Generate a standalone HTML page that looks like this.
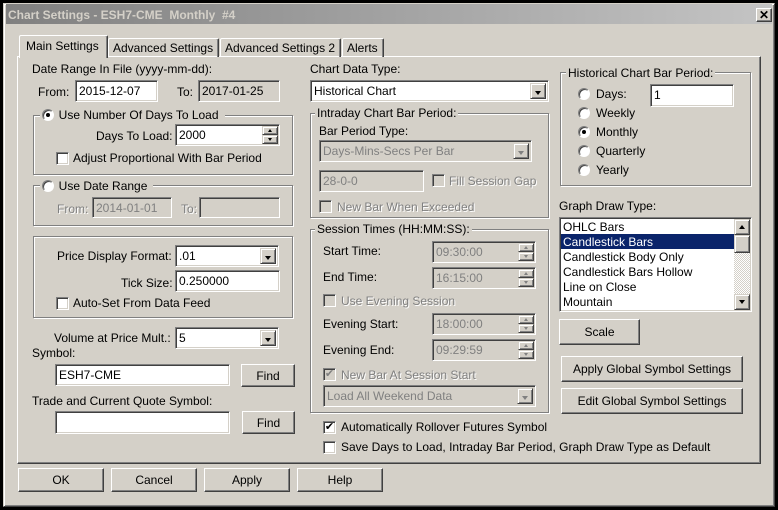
<!DOCTYPE html>
<html><head><meta charset="utf-8"><style>
*{box-sizing:border-box;margin:0;padding:0}
body{width:778px;height:510px;background:#000;font-family:"Liberation Sans",sans-serif;font-size:12px;color:#000;position:relative;overflow:hidden}
.a{position:absolute}
.t{position:absolute;white-space:nowrap;line-height:14px}
.g{color:#808080;text-shadow:1px 1px #fff}
.in{position:absolute;background:#fff;border:1px solid;border-color:#808080 #fff #fff #808080;box-shadow:inset 1px 1px #404040,inset -1px -1px #d4d0c8;padding:3px 0 0 3px;line-height:14px;white-space:nowrap;overflow:hidden}
.dis{background:#d4d0c8;color:#808080}
.btn{position:absolute;background:#d4d0c8;border:1px solid;border-color:#fff #404040 #404040 #fff;box-shadow:inset -1px -1px #808080;text-align:center;line-height:22px}
.grp{position:absolute;border:1px solid #808080;box-shadow:1px 1px #fff,inset 1px 1px #fff}
.lg{position:absolute;background:#d4d0c8;padding:0 2px;line-height:14px;white-space:nowrap}
.dd{position:absolute;right:2px;top:2px;bottom:2px;width:16px;background:#d4d0c8;border:1px solid;border-color:#d4d0c8 #404040 #404040 #d4d0c8;box-shadow:inset 1px 1px #fff,inset -1px -1px #808080}
.dd:after{content:"";position:absolute;left:4px;top:7px;border-left:3.5px solid transparent;border-right:3.5px solid transparent;border-top:4px solid #000}
.dd.gd:after{border-top-color:#808080}
.sp{position:absolute;right:2px;width:16px;background:#d4d0c8;border:1px solid;border-color:#d4d0c8 #404040 #404040 #d4d0c8;box-shadow:inset 1px 1px #fff,inset -1px -1px #808080}
.sp.u:after,.sp.d:after{content:"";position:absolute;left:5px;top:2px;border-left:2.5px solid transparent;border-right:2.5px solid transparent}
.sp.u:after{border-bottom:3px solid #000}
.sp.d:after{border-top:3px solid #000}
.sp.gr:after{border-bottom-color:#808080;border-top-color:#808080}
.cb{position:absolute;width:13px;height:13px;background:#fff;border:1px solid;border-color:#808080 #fff #fff #808080;box-shadow:inset 1px 1px #404040,inset -1px -1px #d4d0c8;font-size:11px;line-height:11px;text-align:center}
.cbd{background:#d4d0c8}
.rd{position:absolute;width:12px;height:12px;border-radius:50%;background:#fff;border:1px solid;border-color:#808080 #fff #fff #808080;box-shadow:inset 1px 1px #404040}
.rd.on:after{content:"";position:absolute;left:3px;top:3px;width:4px;height:4px;border-radius:50%;background:#000}
</style></head><body>
<div class="a" style="left:3px;top:3px;width:772px;height:504px;background:#d4d0c8;border:1px solid;border-color:#d4d0c8 #404040 #404040 #d4d0c8;box-shadow:inset 1px 1px #fff,inset -1px -1px #808080"></div>
<div class="a" style="left:6px;top:4px;width:766px;height:20px;background:linear-gradient(90deg,#808080,#c4c4c4)"></div>
<div class="t" style="left:8px;top:8px;color:#d4d0c8;font-weight:bold;font-size:12px">Chart Settings - ESH7-CME &nbsp;Monthly &nbsp;#4</div>
<div class="btn" style="left:756px;top:8px;width:16px;height:14px;line-height:12px;font-size:12px;font-weight:bold">✕</div>

<div class="a" style="left:17px;top:56px;width:744px;height:408px;border:1px solid;border-color:#fff #404040 #404040 #fff;box-shadow:inset -1px -1px #808080"></div>
<div class="a" style="left:108px;top:38px;width:111px;height:19px;border:1px solid;border-bottom:none;border-color:#fff #404040 #404040 #fff;border-radius:2px 2px 0 0;box-shadow:inset -1px 0 #808080"></div>
<div class="t" style="left:113px;top:41px">Advanced Settings</div>
<div class="a" style="left:220px;top:38px;width:121px;height:19px;border:1px solid;border-bottom:none;border-color:#fff #404040 #404040 #fff;border-radius:2px 2px 0 0;box-shadow:inset -1px 0 #808080"></div>
<div class="t" style="left:225px;top:41px">Advanced Settings 2</div>
<div class="a" style="left:342px;top:38px;width:42px;height:19px;border:1px solid;border-bottom:none;border-color:#fff #404040 #404040 #fff;border-radius:2px 2px 0 0;box-shadow:inset -1px 0 #808080"></div>
<div class="t" style="left:347px;top:41px">Alerts</div>
<div class="a" style="left:19px;top:35px;width:89px;height:23px;background:#d4d0c8;border:1px solid;border-bottom:none;border-color:#fff #404040 #404040 #fff;border-radius:2px 2px 0 0;box-shadow:inset -1px 0 #808080"></div>
<div class="t" style="left:26px;top:39px">Main Settings</div>

<div class="t" style="left:32px;top:62px">Date Range In File (yyyy-mm-dd):</div>
<div class="t" style="left:38px;top:85px">From:</div>
<div class="in" style="left:75px;top:80px;width:83px;height:22px">2015-12-07</div>
<div class="t" style="left:177px;top:85px">To:</div>
<div class="in dis" style="left:198px;top:80px;width:82px;height:22px;color:#000">2017-01-25</div>

<div class="grp" style="left:33px;top:115px;width:260px;height:60px"></div>
<div class="lg" style="left:40px;top:108px;padding-right:6px">&nbsp;&nbsp;&nbsp;&nbsp;&nbsp;Use Number Of Days To Load</div>
<div class="rd on" style="left:42px;top:109px"></div>
<div class="t" style="left:96px;top:129px">Days To Load:</div>
<div class="in" style="left:175px;top:124px;width:105px;height:22px">2000</div>
<div class="sp u" style="left:262px;top:126px;height:9px"></div>
<div class="sp d" style="left:262px;top:135px;height:9px"></div>
<div class="cb" style="left:56px;top:152px"></div>
<div class="t" style="left:73px;top:151px">Adjust Proportional With Bar Period</div>

<div class="grp" style="left:33px;top:185px;width:260px;height:41px"></div>
<div class="lg" style="left:40px;top:179px;padding-right:6px">&nbsp;&nbsp;&nbsp;&nbsp;&nbsp;Use Date Range</div>
<div class="rd" style="left:42px;top:180px"></div>
<div class="t g" style="left:57px;top:202px">From:</div>
<div class="in dis" style="left:92px;top:197px;width:80px;height:21px">2014-01-01</div>
<div class="t g" style="left:181px;top:202px">To:</div>
<div class="in dis" style="left:199px;top:197px;width:81px;height:21px"></div>

<div class="grp" style="left:33px;top:236px;width:260px;height:82px"></div>
<div class="t" style="left:57px;top:249px">Price Display Format:</div>
<div class="in" style="left:175px;top:245px;width:104px;height:22px">.01<div class="dd"></div></div>
<div class="t" style="left:121px;top:276px">Tick Size:</div>
<div class="in" style="left:175px;top:270px;width:105px;height:22px">0.250000</div>
<div class="cb" style="left:56px;top:297px"></div>
<div class="t" style="left:73px;top:296px">Auto-Set From Data Feed</div>

<div class="t" style="left:54px;top:331px">Volume at Price Mult.:</div>
<div class="in" style="left:175px;top:327px;width:104px;height:22px">5<div class="dd"></div></div>
<div class="t" style="left:32px;top:346px">Symbol:</div>
<div class="in" style="left:55px;top:364px;width:175px;height:22px">ESH7-CME</div>
<div class="btn" style="left:241px;top:364px;width:54px;height:23px">Find</div>
<div class="t" style="left:32px;top:394px">Trade and Current Quote Symbol:</div>
<div class="in" style="left:55px;top:411px;width:175px;height:23px"></div>
<div class="btn" style="left:242px;top:411px;width:53px;height:23px">Find</div>

<div class="btn" style="left:18px;top:468px;width:86px;height:24px">OK</div>
<div class="btn" style="left:111px;top:468px;width:86px;height:24px">Cancel</div>
<div class="btn" style="left:204px;top:468px;width:86px;height:24px">Apply</div>
<div class="btn" style="left:297px;top:468px;width:86px;height:24px">Help</div>

<div class="t" style="left:310px;top:62px">Chart Data Type:</div>
<div class="in" style="left:310px;top:80px;width:239px;height:22px">Historical Chart<div class="dd"></div></div>
<div class="grp" style="left:310px;top:113px;width:239px;height:105px"></div>
<div class="lg" style="left:315px;top:106px">Intraday Chart Bar Period:</div>
<div class="t" style="left:319px;top:124px">Bar Period Type:</div>
<div class="in dis" style="left:319px;top:140px;width:213px;height:22px">Days-Mins-Secs Per Bar<div class="dd gd"></div></div>
<div class="in dis" style="left:319px;top:170px;width:105px;height:22px">28-0-0</div>
<div class="cb cbd" style="left:432px;top:174px"></div>
<div class="t g" style="left:449px;top:174px">Fill Session Gap</div>
<div class="cb cbd" style="left:319px;top:200px"></div>
<div class="t g" style="left:337px;top:200px">New Bar When Exceeded</div>

<div class="grp" style="left:310px;top:229px;width:239px;height:184px"></div>
<div class="lg" style="left:315px;top:222px">Session Times (HH:MM:SS):</div>
<div class="t" style="left:323px;top:244px">Start Time:</div>
<div class="in dis" style="left:432px;top:241px;width:104px;height:22px">09:30:00</div>
<div class="t" style="left:323px;top:270px">End Time:</div>
<div class="in dis" style="left:432px;top:267px;width:104px;height:22px">16:15:00</div>
<div class="cb cbd" style="left:323px;top:294px"></div>
<div class="t g" style="left:341px;top:294px">Use Evening Session</div>
<div class="t" style="left:323px;top:317px">Evening Start:</div>
<div class="in dis" style="left:432px;top:313px;width:104px;height:22px">18:00:00</div>
<div class="t" style="left:323px;top:343px">Evening End:</div>
<div class="in dis" style="left:432px;top:339px;width:104px;height:22px">09:29:59</div>
<div class="sp u gr" style="left:518px;top:243px;height:9px"></div><div class="sp d gr" style="left:518px;top:252px;height:9px"></div>
<div class="sp u gr" style="left:518px;top:269px;height:9px"></div><div class="sp d gr" style="left:518px;top:278px;height:9px"></div>
<div class="sp u gr" style="left:518px;top:315px;height:9px"></div><div class="sp d gr" style="left:518px;top:324px;height:9px"></div>
<div class="sp u gr" style="left:518px;top:341px;height:9px"></div><div class="sp d gr" style="left:518px;top:350px;height:9px"></div>
<div class="cb cbd" style="left:323px;top:368px;color:#808080">✔</div>
<div class="t g" style="left:341px;top:368px">New Bar At Session Start</div>
<div class="in dis" style="left:323px;top:385px;width:213px;height:22px">Load All Weekend Data<div class="dd gd"></div></div>
<div class="cb" style="left:323px;top:421px">✔</div>
<div class="t" style="left:341px;top:420px">Automatically Rollover Futures Symbol</div>
<div class="cb" style="left:323px;top:441px"></div>
<div class="t" style="left:341px;top:440px">Save Days to Load, Intraday Bar Period, Graph Draw Type as Default</div>

<div class="grp" style="left:560px;top:72px;width:191px;height:114px"></div>
<div class="lg" style="left:566px;top:66px">Historical Chart Bar Period:</div>
<div class="rd" style="left:578px;top:88px"></div><div class="t" style="left:596px;top:87px">Days:</div>
<div class="rd" style="left:578px;top:107px"></div><div class="t" style="left:596px;top:106px">Weekly</div>
<div class="rd on" style="left:578px;top:126px"></div><div class="t" style="left:596px;top:125px">Monthly</div>
<div class="rd" style="left:578px;top:145px"></div><div class="t" style="left:596px;top:144px">Quarterly</div>
<div class="rd" style="left:578px;top:164px"></div><div class="t" style="left:596px;top:163px">Yearly</div>
<div class="in" style="left:650px;top:84px;width:84px;height:23px">1</div>

<div class="t" style="left:559px;top:199px">Graph Draw Type:</div>
<div class="in" style="left:559px;top:217px;width:193px;height:95px;padding:0"></div>
<div class="t" style="left:563px;top:220px">OHLC Bars</div>
<div class="a" style="left:561px;top:234px;width:173px;height:15px;background:#0a246a"></div>
<div class="t" style="left:563px;top:235px;color:#fff">Candlestick Bars</div>
<div class="t" style="left:563px;top:250px">Candlestick Body Only</div>
<div class="t" style="left:563px;top:265px">Candlestick Bars Hollow</div>
<div class="t" style="left:563px;top:280px">Line on Close</div>
<div class="t" style="left:563px;top:295px">Mountain</div>
<div class="a" style="left:734px;top:219px;width:16px;height:91px;background:repeating-conic-gradient(#d4d0c8 0 25%,#fff 0 50%) 0 0/2px 2px"></div>
<div class="sp" style="left:734px;top:219px;height:16px;right:auto"></div>
<div class="a" style="left:739px;top:225px;border-left:3.5px solid transparent;border-right:3.5px solid transparent;border-bottom:4px solid #000"></div>
<div class="sp" style="left:734px;top:235px;height:18px;right:auto"></div>
<div class="sp" style="left:734px;top:294px;height:16px;right:auto"></div>
<div class="a" style="left:739px;top:300px;border-left:3.5px solid transparent;border-right:3.5px solid transparent;border-top:4px solid #000"></div>

<div class="btn" style="left:559px;top:319px;width:81px;height:26px;line-height:24px">Scale</div>
<div class="btn" style="left:561px;top:356px;width:182px;height:26px;line-height:24px">Apply Global Symbol Settings</div>
<div class="btn" style="left:561px;top:388px;width:182px;height:26px;line-height:24px">Edit Global Symbol Settings</div>
</body></html>
